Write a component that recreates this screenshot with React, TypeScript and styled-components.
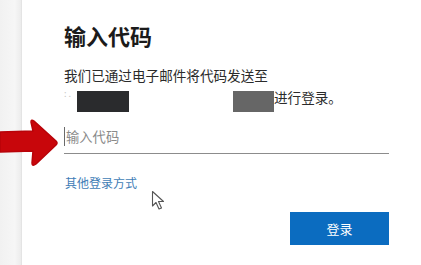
import styled, { createGlobalStyle } from "styled-components";

const GlobalStyle = createGlobalStyle`
  html, body {
    margin: 0;
    padding: 0;
    background: #ffffff;
  }
  body {
    font-family: "Noto Sans CJK SC", "Noto Sans", sans-serif;
  }
`;

const Page = styled.div`
  position: relative;
  display: flex;
  width: 421px;
  height: 265px;
  overflow: hidden;
  background: #ffffff;
`;

const SideStrip = styled.div`
  width: 21px;
  flex-shrink: 0;
  background: linear-gradient(90deg, #f1f1f1 0%, #f6f6f6 70%, #ececec 100%);
  border-right: 1px solid #e4e4e4;
`;

const Card = styled.div`
  display: flex;
  flex-direction: column;
  width: 325px;
  padding: 21px 0 0 42px;
`;

const Title = styled.h1`
  margin: 0;
  font-size: 22px;
  line-height: 28px;
  font-weight: 700;
  color: #1b1b1b;
`;

const Message = styled.div`
  margin-top: 15px;
  font-size: 13.6px;
  line-height: 22px;
  color: #2b2b2b;
`;

const Line = styled.div`
  display: flex;
  align-items: flex-start;
  height: 22px;
  white-space: nowrap;
`;

const Faint = styled.span<{ $w: number }>`
  display: inline-block;
  width: ${(p) => p.$w}px;
  color: #c8c8c8;
  font-size: 9px;
  line-height: 16px;
  overflow: hidden;
`;

const Redact = styled.span<{ $w: number; $tone: string }>`
  display: inline-block;
  width: ${(p) => p.$w}px;
  height: 21px;
  margin-top: 5px;
  background: ${(p) => p.$tone};
`;

const Field = styled.div`
  position: relative;
  margin-top: 12px;
  height: 33px;
  border-bottom: 1px solid #8c8c8c;
  display: flex;
  align-items: center;
`;

const Caret = styled.span`
  width: 1px;
  height: 19px;
  background: #6a6a6a;
  margin-right: 1px;
`;

const Placeholder = styled.span`
  font-size: 13.3px;
  color: #8a8a8a;
`;

const AltLink = styled.a`
  margin-top: 20px;
  font-size: 12px;
  line-height: 18px;
  color: #3f7db6;
  text-decoration: none;
  align-self: flex-start;
  padding-left: 1px;
`;

const Actions = styled.div`
  display: flex;
  justify-content: flex-end;
  margin-top: 20px;
`;

const SignInButton = styled.button`
  width: 99px;
  height: 33px;
  border: none;
  background: #0b6cc0;
  color: #ffffff;
  font-family: "Noto Sans CJK SC", sans-serif;
  font-size: 13px;
  cursor: pointer;
`;

const Arrow = styled.svg`
  position: absolute;
  left: 0;
  top: 119px;
`;

const Pointer = styled.svg`
  position: absolute;
  left: 151px;
  top: 190px;
`;

export default function App() {
  return (
    <>
      <GlobalStyle />
      <Page>
        <SideStrip />
        <Card>
          <Title>输入代码</Title>
          <Message>
            <Line>我们已通过电子邮件将代码发送至</Line>
            <Line>
              <Faint $w={13}>: .</Faint>
              <Redact $w={52} $tone="#2a2b2d" />
              <Faint $w={104}> </Faint>
              <Redact $w={41} $tone="#666666" />
              <span>进行登录。</span>
            </Line>
          </Message>
          <Field>
            <Caret />
            <Placeholder>输入代码</Placeholder>
          </Field>
          <AltLink href="#">其他登录方式</AltLink>
          <Actions>
            <SignInButton>登录</SignInButton>
          </Actions>
        </Card>

        <Arrow width="60" height="48" viewBox="0 0 60 48">
          <path
            d="M0 13 L33 12 L31 3 Q31 0 34 2 L56 22 Q58 24 56 26 L36 45 Q32 48 32 44 L33 32 L0 33 Z"
            fill="#c8060b"
            stroke="#b80309"
            strokeWidth="1.5"
            strokeLinejoin="round"
          />
        </Arrow>

        <Pointer width="16" height="22" viewBox="0 0 16 22">
          <path
            d="M1.5 1.5 L1.5 16 L5 12.5 L8 19 L10.5 18 L7.5 11.5 L12.5 11.5 Z"
            fill="#ffffff"
            stroke="#555555"
            strokeWidth="1.1"
            strokeLinejoin="round"
          />
        </Pointer>
      </Page>
    </>
  );
}
